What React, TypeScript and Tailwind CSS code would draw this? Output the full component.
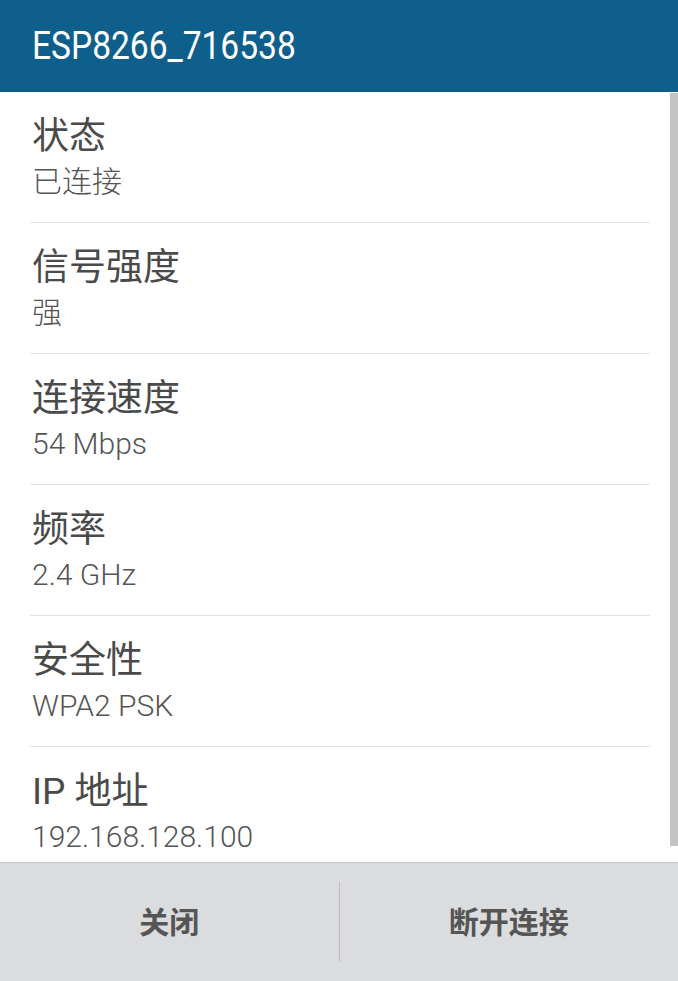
import React from 'react';

const rows = [
  { label: '状态', value: '已连接' },
  { label: '信号强度', value: '强' },
  { label: '连接速度', value: '54 Mbps' },
  { label: '频率', value: '2.4 GHz' },
  { label: '安全性', value: 'WPA2 PSK' },
  { label: 'IP 地址', value: '192.168.128.100' },
];

const font = { fontFamily: 'Roboto, "Noto Sans CJK SC", sans-serif' };

const App: React.FC = () => {
  return (
    <div className="w-[678px] h-[981px] flex flex-col bg-white overflow-hidden" style={font}>
      <header className="h-[92px] shrink-0 bg-[#0e5f8c] flex items-center pl-[32px]">
        <h1 className="inline-block origin-left scale-x-[0.86] text-[39px] leading-none font-normal text-white">
          ESP8266_716538
        </h1>
      </header>

      <div className="flex-1 relative overflow-hidden">
        <div className="ml-[30px] w-[620px]">
          {rows.map((row) => (
            <div key={row.label} className="pt-[25px] pb-[23px] border-b border-[#e2e2e2]">
              <div className="text-[37px] leading-[40px] text-[#4a4a4a] pl-[2px]">{row.label}</div>
              <div className="mt-[8px] text-[30px] leading-[34px] font-light text-[#555555] pl-[2px]">
                {row.value}
              </div>
            </div>
          ))}
        </div>
        <div className="absolute right-0 top-[1px] w-[8px] h-[753px] bg-[#c4c4c4]" />
      </div>

      <footer className="h-[119px] shrink-0 border-t border-[#c6c6c6] bg-[#dbdcdd] flex items-center">
        <button className="flex-1 h-full flex items-center justify-center text-[30px] font-bold text-[#555555]">
          关闭
        </button>
        <div className="w-px h-[80px] bg-[#bcbcbc]" />
        <button className="flex-1 h-full flex items-center justify-center text-[30px] font-bold text-[#555555]">
          断开连接
        </button>
      </footer>
    </div>
  );
};

export default App;
